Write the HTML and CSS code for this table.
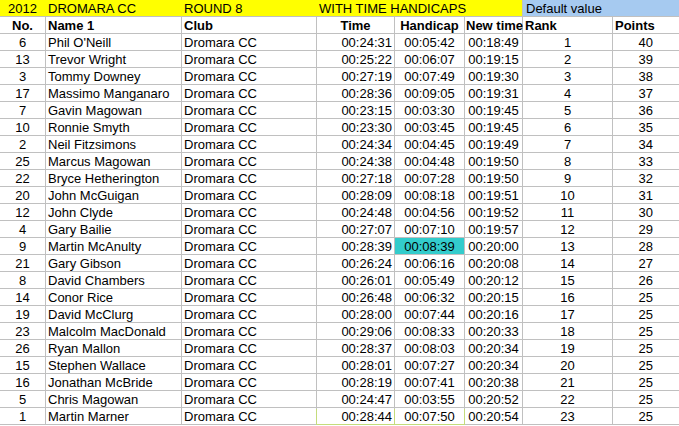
FILE: index.html
```html
<!DOCTYPE html>
<html>
<head>
<meta charset="utf-8">
<link rel="stylesheet" href="styles.css">
</head>
<body>
<div class="sheet">
  <div class="cell y ctr fill">2012</div>
  <div class="cell y fill">DROMARA CC</div>
  <div class="cell y fill">ROUND 8</div>
  <div class="cell y span3">WITH TIME HANDICAPS</div>
  <div class="cell blue span2">Default value</div>

  <div class="cell b ctr">No.</div>
  <div class="cell b">Name 1</div>
  <div class="cell b">Club</div>
  <div class="cell b ctr">Time</div>
  <div class="cell b ctr">Handicap</div>
  <div class="cell b ovf">New time</div>
  <div class="cell b">Rank</div>
  <div class="cell b">Points</div>

  <div class="cell ctr">6</div><div class="cell">Phil O'Neill</div><div class="cell">Dromara CC</div><div class="cell rt">00:24:31</div><div class="cell ctr">00:05:42</div><div class="cell ctr">00:18:49</div><div class="cell ctr">1</div><div class="cell pts">40</div>
  <div class="cell ctr">13</div><div class="cell">Trevor Wright</div><div class="cell">Dromara CC</div><div class="cell rt">00:25:22</div><div class="cell ctr">00:06:07</div><div class="cell ctr">00:19:15</div><div class="cell ctr">2</div><div class="cell pts">39</div>
  <div class="cell ctr">3</div><div class="cell">Tommy Downey</div><div class="cell">Dromara CC</div><div class="cell rt">00:27:19</div><div class="cell ctr">00:07:49</div><div class="cell ctr">00:19:30</div><div class="cell ctr">3</div><div class="cell pts">38</div>
  <div class="cell ctr">17</div><div class="cell">Massimo Manganaro</div><div class="cell">Dromara CC</div><div class="cell rt">00:28:36</div><div class="cell ctr">00:09:05</div><div class="cell ctr">00:19:31</div><div class="cell ctr">4</div><div class="cell pts">37</div>
  <div class="cell ctr">7</div><div class="cell">Gavin Magowan</div><div class="cell">Dromara CC</div><div class="cell rt">00:23:15</div><div class="cell ctr">00:03:30</div><div class="cell ctr">00:19:45</div><div class="cell ctr">5</div><div class="cell pts">36</div>
  <div class="cell ctr">10</div><div class="cell">Ronnie Smyth</div><div class="cell">Dromara CC</div><div class="cell rt">00:23:30</div><div class="cell ctr">00:03:45</div><div class="cell ctr">00:19:45</div><div class="cell ctr">6</div><div class="cell pts">35</div>
  <div class="cell ctr">2</div><div class="cell">Neil Fitzsimons</div><div class="cell">Dromara CC</div><div class="cell rt">00:24:34</div><div class="cell ctr">00:04:45</div><div class="cell ctr">00:19:49</div><div class="cell ctr">7</div><div class="cell pts">34</div>
  <div class="cell ctr">25</div><div class="cell">Marcus Magowan</div><div class="cell">Dromara CC</div><div class="cell rt">00:24:38</div><div class="cell ctr">00:04:48</div><div class="cell ctr">00:19:50</div><div class="cell ctr">8</div><div class="cell pts">33</div>
  <div class="cell ctr">22</div><div class="cell">Bryce Hetherington</div><div class="cell">Dromara CC</div><div class="cell rt">00:27:18</div><div class="cell ctr">00:07:28</div><div class="cell ctr">00:19:50</div><div class="cell ctr">9</div><div class="cell pts">32</div>
  <div class="cell ctr">20</div><div class="cell">John McGuigan</div><div class="cell">Dromara CC</div><div class="cell rt">00:28:09</div><div class="cell ctr">00:08:18</div><div class="cell ctr">00:19:51</div><div class="cell ctr">10</div><div class="cell pts">31</div>
  <div class="cell ctr">12</div><div class="cell">John Clyde</div><div class="cell">Dromara CC</div><div class="cell rt">00:24:48</div><div class="cell ctr">00:04:56</div><div class="cell ctr">00:19:52</div><div class="cell ctr">11</div><div class="cell pts">30</div>
  <div class="cell ctr">4</div><div class="cell">Gary Bailie</div><div class="cell">Dromara CC</div><div class="cell rt">00:27:07</div><div class="cell ctr">00:07:10</div><div class="cell ctr">00:19:57</div><div class="cell ctr">12</div><div class="cell pts">29</div>
  <div class="cell ctr">9</div><div class="cell">Martin McAnulty</div><div class="cell">Dromara CC</div><div class="cell rt">00:28:39</div><div class="cell ctr teal">00:08:39</div><div class="cell ctr">00:20:00</div><div class="cell ctr">13</div><div class="cell pts">28</div>
  <div class="cell ctr">21</div><div class="cell">Gary Gibson</div><div class="cell">Dromara CC</div><div class="cell rt">00:26:24</div><div class="cell ctr">00:06:16</div><div class="cell ctr">00:20:08</div><div class="cell ctr">14</div><div class="cell pts">27</div>
  <div class="cell ctr">8</div><div class="cell">David Chambers</div><div class="cell">Dromara CC</div><div class="cell rt">00:26:01</div><div class="cell ctr">00:05:49</div><div class="cell ctr">00:20:12</div><div class="cell ctr">15</div><div class="cell pts">26</div>
  <div class="cell ctr">14</div><div class="cell">Conor Rice</div><div class="cell">Dromara CC</div><div class="cell rt">00:26:48</div><div class="cell ctr">00:06:32</div><div class="cell ctr">00:20:15</div><div class="cell ctr">16</div><div class="cell pts">25</div>
  <div class="cell ctr">19</div><div class="cell">David McClurg</div><div class="cell">Dromara CC</div><div class="cell rt">00:28:00</div><div class="cell ctr">00:07:44</div><div class="cell ctr">00:20:16</div><div class="cell ctr">17</div><div class="cell pts">25</div>
  <div class="cell ctr">23</div><div class="cell">Malcolm MacDonald</div><div class="cell">Dromara CC</div><div class="cell rt">00:29:06</div><div class="cell ctr">00:08:33</div><div class="cell ctr">00:20:33</div><div class="cell ctr">18</div><div class="cell pts">25</div>
  <div class="cell ctr">26</div><div class="cell">Ryan Mallon</div><div class="cell">Dromara CC</div><div class="cell rt">00:28:37</div><div class="cell ctr">00:08:03</div><div class="cell ctr">00:20:34</div><div class="cell ctr">19</div><div class="cell pts">25</div>
  <div class="cell ctr">15</div><div class="cell">Stephen Wallace</div><div class="cell">Dromara CC</div><div class="cell rt">00:28:01</div><div class="cell ctr">00:07:27</div><div class="cell ctr">00:20:34</div><div class="cell ctr">20</div><div class="cell pts">25</div>
  <div class="cell ctr">16</div><div class="cell">Jonathan McBride</div><div class="cell">Dromara CC</div><div class="cell rt">00:28:19</div><div class="cell ctr">00:07:41</div><div class="cell ctr">00:20:38</div><div class="cell ctr">21</div><div class="cell pts">25</div>
  <div class="cell ctr">5</div><div class="cell">Chris Magowan</div><div class="cell">Dromara CC</div><div class="cell rt">00:24:47</div><div class="cell ctr">00:03:55</div><div class="cell ctr">00:20:52</div><div class="cell ctr">22</div><div class="cell pts">25</div>
  <div class="cell ctr">1</div><div class="cell">Martin Marner</div><div class="cell">Dromara CC</div><div class="cell rt sel-a">00:28:44</div><div class="cell ctr sel-b">00:07:50</div><div class="cell ctr">00:20:54</div><div class="cell ctr">23</div><div class="cell pts">25</div>
</div>
</body>
</html>
```

FILE: styles.css
```css
html, body {
  margin: 0;
  padding: 0;
  background: #ffffff;
}

body {
  width: 679px;
  height: 426px;
  overflow: hidden;
  font-family: "Liberation Sans", Arial, sans-serif;
  font-size: 13px;
  color: #000000;
}

.sheet {
  display: grid;
  grid-template-columns: 45px 135px 134px 77px 69px 57px 89px 66px;
  grid-auto-rows: 16px;
  gap: 1px;
  width: 679px;
  background: #c0c0c0;
  padding-bottom: 1px;
}

.cell {
  background: #ffffff;
  box-sizing: border-box;
  height: 16px;
  padding: 1px 2px 0 2px;
  line-height: 16px;
  white-space: nowrap;
  overflow: hidden;
}

.ctr { text-align: center; }
.rt { text-align: right; }
.pts { text-align: right; padding-right: 26px; }
.b { font-weight: bold; }
.ovf { padding: 1px 0 0 1px; overflow: visible; }

.y { background: #ffff00; }
.fill { box-shadow: 1px 0 0 #ffff00; }
.span3 { grid-column: 4 / 7; }
.span2 { grid-column: 7 / 9; }
.blue { background: #a6caf0; padding-left: 3px; }

.teal { background: #33cccc; }

.sel-a { box-shadow: 0 1px 0 #c4dc7c, -1px 1px 0 #c4dc7c; }
.sel-b { box-shadow: 0 1px 0 #c4dc7c, 1px 1px 0 #c4dc7c, -1px 1px 0 #c4dc7c; }
```
